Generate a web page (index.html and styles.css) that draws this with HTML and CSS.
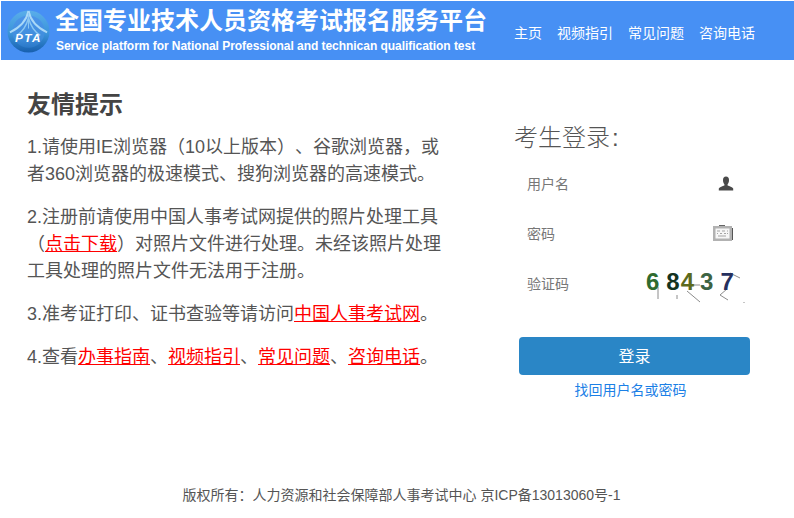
FILE: index.html
```html
<!DOCTYPE html>
<html lang="zh-CN">
<head>
<meta charset="utf-8">
<title>全国专业技术人员资格考试报名服务平台</title>
<link rel="stylesheet" href="styles.css">
</head>
<body>
<header class="header">
  <svg class="logo" viewBox="0 0 44 44" width="43" height="43" aria-hidden="true">
    <defs>
      <linearGradient id="g" x1="0" y1="0" x2="0" y2="1">
        <stop offset="0" stop-color="#5aaeea"/>
        <stop offset="0.55" stop-color="#3a93da"/>
        <stop offset="1" stop-color="#175fae"/>
      </linearGradient>
      <linearGradient id="h" x1="0" y1="0" x2="0" y2="1">
        <stop offset="0" stop-color="#4c94ea"/>
        <stop offset="0.7" stop-color="#3f8edc"/>
        <stop offset="1" stop-color="#2a78c8"/>
      </linearGradient>
    </defs>
    <circle cx="22" cy="22" r="21.5" fill="url(#g)"/>
    <circle cx="22" cy="22" r="16.5" fill="url(#h)"/>
    <path d="M22 1C20 11 13 18 3 23" fill="none" stroke="#a9d8f7" stroke-width="2"/>
    <path d="M22 1C24 11 31 18 41 23" fill="none" stroke="#a9d8f7" stroke-width="2"/>
    <path d="M22 8C20 16 16 22 10 26" fill="none" stroke="#8cc8f2" stroke-width="1.5"/>
    <path d="M22 8C24 16 28 22 34 26" fill="none" stroke="#8cc8f2" stroke-width="1.5"/>
    <path d="M22 3V19" stroke="#8cc8f2" stroke-width="1"/>
    <text x="22" y="33" class="logo-text" text-anchor="middle">PTA</text>
  </svg>
  <div class="brand">
    <div class="brand-title">全国专业技术人员资格考试报名服务平台</div>
    <div class="brand-sub">Service platform for National Professional and technican qualification test</div>
  </div>
  <nav class="nav">
    <a href="#">主页</a>
    <a href="#">视频指引</a>
    <a href="#">常见问题</a>
    <a href="#">咨询电话</a>
  </nav>
</header>

<main class="main">
  <section class="tips">
    <h2 class="tips-title">友情提示</h2>
    <p>1.请使用IE浏览器（10以上版本）、谷歌浏览器，或者360浏览器的极速模式、搜狗浏览器的高速模式。</p>
    <p>2.注册前请使用中国人事考试网提供的照片处理工具（<a href="#">点击下载</a>）对照片文件进行处理。未经该照片处理工具处理的照片文件无法用于注册。</p>
    <p>3.准考证打印、证书查验等请访问<a href="#">中国人事考试网</a>。</p>
    <p>4.查看<a href="#">办事指南</a>、<a href="#">视频指引</a>、<a href="#">常见问题</a>、<a href="#">咨询电话</a>。</p>
  </section>

  <section class="login">
    <h3 class="login-title">考生登录<span class="colon">:</span></h3>
    <div class="field">
      <span>用户名</span>
      <svg class="icon-user" viewBox="0 0 16 15" width="16" height="15" aria-hidden="true">
        <path d="M8 0.5C6 0.5 5 2 5 4C5 6 5.6 7.4 6.4 8.2V9.4C4.6 10.3 1.6 10.8 0.8 12.4V14.5H15.2V12.4C14.4 10.8 11.4 10.3 9.6 9.4V8.2C10.4 7.4 11 6 11 4C11 2 10 0.5 8 0.5Z" fill="#4a4a4a"/>
      </svg>
    </div>
    <div class="field">
      <span>密码</span>
      <svg class="icon-key" viewBox="0 0 20 16" width="20" height="16" aria-hidden="true">
        <rect x="6" y="0" width="6" height="2" fill="#666"/>
        <rect x="0" y="1" width="19" height="15" fill="#b2b2b2"/>
        <rect x="19" y="3" width="1" height="12" fill="#555"/>
        <rect x="2.5" y="3.5" width="14" height="10" fill="#f7f7f7"/>
        <path d="M4 6H7M9 6H12M14 6H15M4 8.5H5M7 8.5H9M11 8.5H13M14 8.5H15M5 11H13" stroke="#a5a5a5" stroke-width="1"/>
      </svg>
    </div>
    <div class="field">
      <span>验证码</span>
      <div class="captcha">
        <svg class="captcha-noise" viewBox="0 0 105 44" width="105" height="44" aria-hidden="true">
          <path d="M12 24V36M31 32V36M41 28L54 39M84 10L94 15M81 26L74 32M74 32L82 37M98 39V40M47 22H54" fill="none" stroke="#8c8c8c" stroke-width="1"/>
        </svg>
        <span class="d d1">6</span><span class="d d2">8</span><span class="d d3">4</span><span class="d d4">3</span><span class="d d5">7</span>
      </div>
    </div>
    <button class="btn" type="button">登录</button>
    <a class="forgot" href="#">找回用户名或密码</a>
  </section>
</main>

<footer class="footer">版权所有：人力资源和社会保障部人事考试中心 京ICP备13013060号-1</footer>
</body>
</html>
```
FILE: styles.css
```css
* { box-sizing: border-box; }
html, body { margin: 0; padding: 0; }
body {
  width: 794px;
  height: 518px;
  background: #fff;
  overflow: hidden;
  font-family: "Liberation Sans", "Noto Sans CJK SC", sans-serif;
  color: #444;
  text-spacing-trim: space-all;
}

.header {
  height: 59px;
  margin: 1px 0 0 1px;
  background: #4790f4;
  display: flex;
  align-items: flex-start;
  color: #fff;
}
.logo { margin: 9px 0 0 6px; flex: none; }
.logo-text {
  font-family: "Liberation Sans", sans-serif;
  font-size: 12px;
  font-weight: bold;
  font-style: italic;
  fill: #fff;
  letter-spacing: 1.5px;
}
.brand { margin-left: 5px; width: 459px; flex: none; }
.brand-title {
  font-family: "Noto Sans CJK SC", sans-serif;
  font-size: 24px;
  font-weight: 700;
  line-height: 36px;
  white-space: nowrap;
}
.brand-sub {
  margin: 2px 0 0 1px;
  font-size: 12px;
  font-weight: 700;
  line-height: 14px;
  letter-spacing: -0.04px;
  white-space: nowrap;
}
.nav {
  display: flex;
  gap: 15px;
  margin-top: 21px;
}
.nav a {
  color: #fff;
  font-size: 14px;
  line-height: 20px;
  text-decoration: none;
  font-family: "Noto Sans CJK SC", sans-serif;
}

.main {
  display: flex;
  align-items: flex-start;
  height: 415px;
}
.tips {
  width: 416px;
  margin: 28px 0 0 27px;
  flex: none;
  font-size: 18px;
  line-height: 27px;
}
.tips-title {
  margin: 0 0 13px;
  font-size: 24px;
  line-height: 33px;
  font-weight: 700;
  color: #444;
}
.tips p { margin: 0 0 16px; color: #555; }
.tips a { color: #f00; text-decoration: underline; }

.login {
  width: 231px;
  margin: 61px 0 0 76px;
  flex: none;
}
.login-title {
  margin: 0 0 3px -5px;
  font-size: 24px;
  line-height: 34px;
  font-weight: 300;
  color: #555;
  white-space: nowrap;
}
.colon { margin-left: 2px; }
.field {
  height: 50px;
  display: flex;
  align-items: center;
  justify-content: space-between;
  padding-left: 8px;
  font-size: 14px;
  color: #777;
}
.icon-user { margin-right: 16px; }
.icon-key { margin-right: 17px; }
.captcha {
  position: relative;
  width: 105px;
  height: 40px;
  margin-right: -1px;
  padding: 3px 0 0;
  display: flex;
  font-family: "Liberation Sans", sans-serif;
  font-size: 24px;
  font-weight: 700;
  line-height: 32px;
}
.captcha-noise { position: absolute; left: 0; top: 0; }
.d { position: relative; }
.d1 { color: #2f6b2f; }
.d2 { color: #14331f; margin-left: 7px; }
.d3 { color: #5c6a1c; margin-left: 1px; }
.d4 { color: #3d6343; margin-left: 6px; }
.d5 { color: #26305e; margin-left: 7px; }

.btn {
  display: block;
  width: 231px;
  height: 38px;
  margin-top: 29px;
  padding: 0 0 2px;
  border: 0;
  border-radius: 4px;
  background: #2a86c6;
  color: #fff;
  font-family: "Liberation Sans", "Noto Sans CJK SC", sans-serif;
  font-size: 16px;
}
.forgot {
  display: block;
  margin-top: 6px;
  padding-right: 8px;
  text-align: center;
  font-size: 14px;
  line-height: 18px;
  color: #1b80e6;
  text-decoration: none;
}

.footer {
  text-align: center;
  font-size: 14px;
  line-height: 20px;
  margin-top: 10px;
  padding-left: 9px;
  color: #555;
}
```
